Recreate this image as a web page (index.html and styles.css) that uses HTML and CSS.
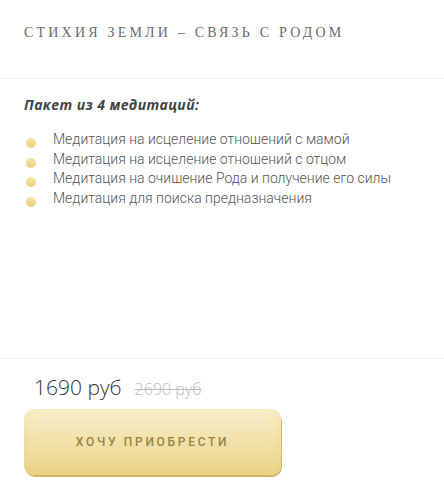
FILE: index.html
```html
<!DOCTYPE html>
<html lang="ru">

<head>
    <meta charset="UTF-8">
    <meta name="viewport" content="width=device-width, initial-scale=1.0">
    <title>Стихия Земли</title>
    <link rel="stylesheet" href="styles.css">
</head>

<body>
    <div class="card">
        <header class="card-head">
            <h1 class="title">Стихия Земли – Связь с Родом</h1>
        </header>

        <section class="card-body">
            <h2 class="pack">Пакет из 4 медитаций:</h2>
            <ul class="list">
                <li>Медитация на исцеление отношений с мамой</li>
                <li>Медитация на исцеление отношений с отцом</li>
                <li>Медитация на очишение Рода и получение его силы</li>
                <li>Медитация для поиска предназначения</li>
            </ul>
        </section>

        <footer class="card-foot">
            <div class="price">
                <span class="price-now">1690 руб</span>
                <span class="price-old">2690 руб</span>
            </div>
            <button class="buy">Хочу приобрести</button>
        </footer>
    </div>
</body>

</html>
```

FILE: styles.css
```css
* {
    margin: 0;
    padding: 0;
    box-sizing: border-box;
}

body {
    background-color: #fff;
    font-family: Roboto, "Liberation Sans", sans-serif;
    color: #555;
}

.card {
    width: 444px;
    height: 493px;
    display: flex;
    flex-direction: column;
}

.card-head {
    height: 79px;
    padding: 23px 24px 0;
    border-bottom: 1px solid #efefef;
}

.title {
    font-family: "Liberation Serif", serif;
    font-weight: 400;
    font-size: 14px;
    line-height: 20px;
    letter-spacing: 3.2px;
    text-transform: uppercase;
    color: #6a6a6a;
}

.card-body {
    height: 280px;
    padding: 16px 24px 0;
    border-bottom: 1px solid #f2f2f2;
}

.pack {
    font-family: "Open Sans", sans-serif;
    font-style: italic;
    font-weight: 700;
    font-size: 14px;
    line-height: 20px;
    letter-spacing: 0.4px;
    color: #444;
}

.list {
    list-style: none;
    margin-top: 15px;
}

.list li {
    position: relative;
    padding-left: 29px;
    font-size: 14px;
    font-weight: 300;
    line-height: 19.5px;
    color: #555;
}

.list li::before {
    content: "";
    position: absolute;
    left: 2px;
    top: 8px;
    width: 10px;
    height: 10px;
    border-radius: 50%;
    background: linear-gradient(#f4e4a8, #e8cf7a);
}

.card-foot {
    padding: 14px 24px 0;
}

.price {
    padding-left: 10px;
    display: flex;
    align-items: baseline;
    gap: 13px;
}

.price-now {
    font-family: "Open Sans", sans-serif;
    font-size: 21px;
    font-weight: 300;
    color: #333;
}

.price-old {
    font-family: "Open Sans", sans-serif;
    font-size: 16px;
    font-weight: 300;
    color: #bbb;
    text-decoration: line-through;
}

.buy {
    display: block;
    margin-top: 8px;
    width: 257px;
    height: 66px;
    border: none;
    border-radius: 10px;
    background: linear-gradient(#f7eec9, #ecd58a);
    box-shadow: 1px 2px 0 #d0b868, inset 0 -6px 10px rgba(230, 200, 110, 0.3);
    font-family: Roboto, sans-serif;
    font-weight: 500;
    font-size: 12px;
    letter-spacing: 2.7px;
    text-transform: uppercase;
    color: #978440;
}
```
